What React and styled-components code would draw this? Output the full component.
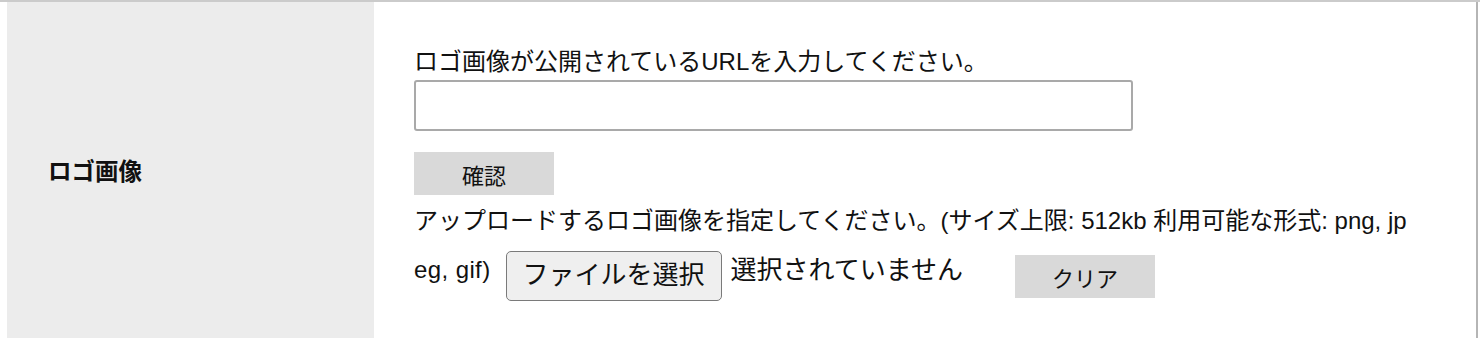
import React from 'react';
import styled, { createGlobalStyle } from 'styled-components';

const GlobalStyle = createGlobalStyle`
  html, body {
    margin: 0;
    padding: 0;
    background: #fff;
  }
  body {
    font-family: 'Liberation Sans', 'Noto Sans CJK JP', sans-serif;
    color: #111;
  }
`;

const Table = styled.div`
  border-top: 2px solid #cbcbcb;
  padding-left: 7px;
  padding-right: 2px;
`;

const Row = styled.div`
  display: grid;
  grid-template-columns: 367px 1fr;
  min-height: 336px;
`;

const Label = styled.div`
  background: #ececec;
  display: flex;
  align-items: center;
  padding-left: 41px;
  font-size: 23.5px;
  font-weight: bold;
`;

const Field = styled.div`
  border-right: 2px solid #b5b5b5;
  padding: 43px 40px 30px 40px;
  font-size: 24px;
  line-height: 34px;
`;

const Hint = styled.div`
  white-space: nowrap;
`;

const UrlInput = styled.input`
  display: block;
  box-sizing: border-box;
  width: 719px;
  height: 51px;
  margin: 1px 0 0;
  border: 2px solid #a9a9a9;
  border-radius: 3px;
  background: #fff;
  font-size: 22px;
  padding: 0 10px;
  outline: none;
`;

const GrayButton = styled.button`
  display: ${({ $inline }) => ($inline ? 'inline-block' : 'block')};
  width: 140px;
  height: 43px;
  margin: ${({ $inline }) => ($inline ? '14px 0 0 52px' : '21px 0 0')};
  border: none;
  border-radius: 0;
  background: #d9d9d9;
  color: #111;
  font-family: inherit;
  font-size: 22px;
  padding: 0;
  vertical-align: middle;
`;

const Upload = styled.div`
  margin-top: 9px;
`;

const Ext = styled.span`
  vertical-align: middle;
  letter-spacing: 0.4px;
`;

const FileButton = styled.span`
  display: inline-block;
  box-sizing: border-box;
  height: 50px;
  line-height: 46px;
  padding: 0 16px;
  margin: 13px 9px 0 15px;
  border: 1.5px solid #7a7a7a;
  border-radius: 5px;
  background: #efefef;
  font-size: 26px;
  vertical-align: middle;
`;

const NoFile = styled.span`
  font-size: 26px;
  vertical-align: middle;
`;

export default function App() {
  return (
    <>
      <GlobalStyle />
      <Table>
        <Row>
          <Label>ロゴ画像</Label>
          <Field>
            <Hint>ロゴ画像が公開されているURLを入力してください。</Hint>
            <UrlInput type="text" />
            <GrayButton type="button">確認</GrayButton>
            <Upload>
              アップロードするロゴ画像を指定してください。(サイズ上限: 512kb 利用可能な形式: png, jp
              <br />
              <Ext>eg, gif)</Ext>
              <FileButton>ファイルを選択</FileButton>
              <NoFile>選択されていません</NoFile>
              <GrayButton type="button" $inline>
                クリア
              </GrayButton>
            </Upload>
          </Field>
        </Row>
      </Table>
    </>
  );
}
